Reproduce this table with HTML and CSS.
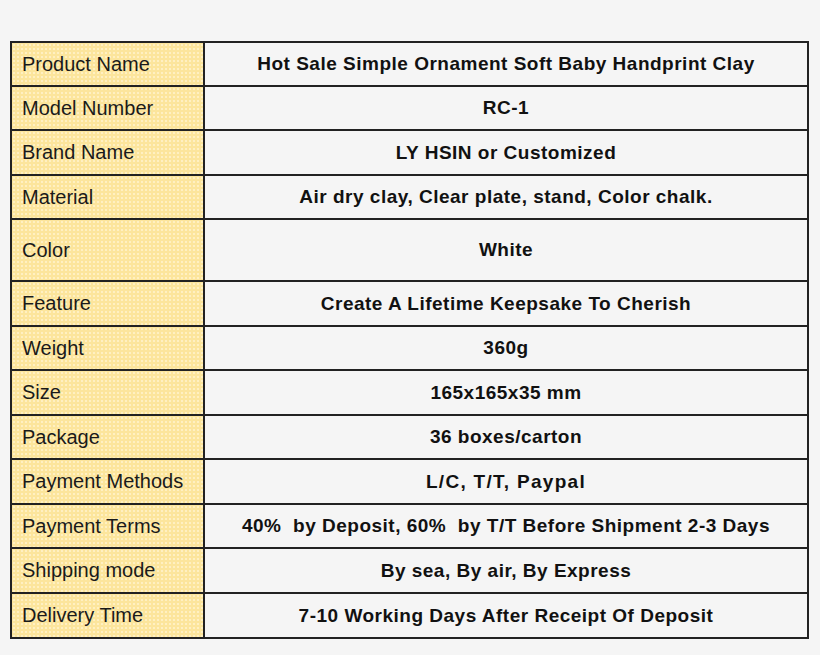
FILE: index.html
```html
<!DOCTYPE html>
<html>
<head>
<meta charset="utf-8">
<link rel="stylesheet" href="styles.css">
</head>
<body>
<table class="spec">
  <tr class="r44"><td class="label">Product Name</td><td class="value">Hot Sale Simple Ornament Soft Baby Handprint Clay</td></tr>
  <tr class="r44"><td class="label">Model Number</td><td class="value">RC-1</td></tr>
  <tr class="r45"><td class="label">Brand Name</td><td class="value">LY HSIN or Customized</td></tr>
  <tr class="r44"><td class="label">Material</td><td class="value">Air dry clay, Clear plate, stand, Color chalk.</td></tr>
  <tr class="r62"><td class="label">Color</td><td class="value">White</td></tr>
  <tr class="r45"><td class="label">Feature</td><td class="value">Create A Lifetime Keepsake To Cherish</td></tr>
  <tr class="r44"><td class="label">Weight</td><td class="value">360g</td></tr>
  <tr class="r45"><td class="label">Size</td><td class="value">165x165x35 mm</td></tr>
  <tr class="r44"><td class="label">Package</td><td class="value">36 boxes/carton</td></tr>
  <tr class="r45"><td class="label">Payment Methods</td><td class="value wide">L/C, T/T, Paypal</td></tr>
  <tr class="r44"><td class="label">Payment Terms</td><td class="value">40%&nbsp; by Deposit, 60%&nbsp; by T/T Before Shipment 2-3 Days</td></tr>
  <tr class="r45"><td class="label">Shipping mode</td><td class="value">By sea, By air, By Express</td></tr>
  <tr class="r45"><td class="label">Delivery Time</td><td class="value">7-10 Working Days After Receipt Of Deposit</td></tr>
</table>
</body>
</html>
```
FILE: styles.css
```css
html, body {
  margin: 0;
  background: #f5f5f5;
}
body {
  padding: 41px 0 0 10px;
  font-family: "Liberation Sans", Arial, sans-serif;
}
.spec {
  border-collapse: collapse;
  width: 799px;
  table-layout: fixed;
}
.spec td {
  border: 2px solid #222;
  padding: 0;
  vertical-align: middle;
  color: #111;
}
.r44 { height: 44px; }
.r45 { height: 45px; }
.r62 { height: 62px; }
.label {
  width: 181px;
  padding-left: 10px !important;
  font-size: 20px;
  color: #1a1a1a !important;
  background-color: #fce59c;
  background-image:
    radial-gradient(circle, #fff0c2 38%, transparent 42%);
  background-size: 4px 4px;
}
.value {
  text-align: center;
  font-weight: bold;
  font-size: 19px;
  letter-spacing: 0.5px;
  background: #f5f5f5;
}
.wide {
  letter-spacing: 1.3px;
}
```
